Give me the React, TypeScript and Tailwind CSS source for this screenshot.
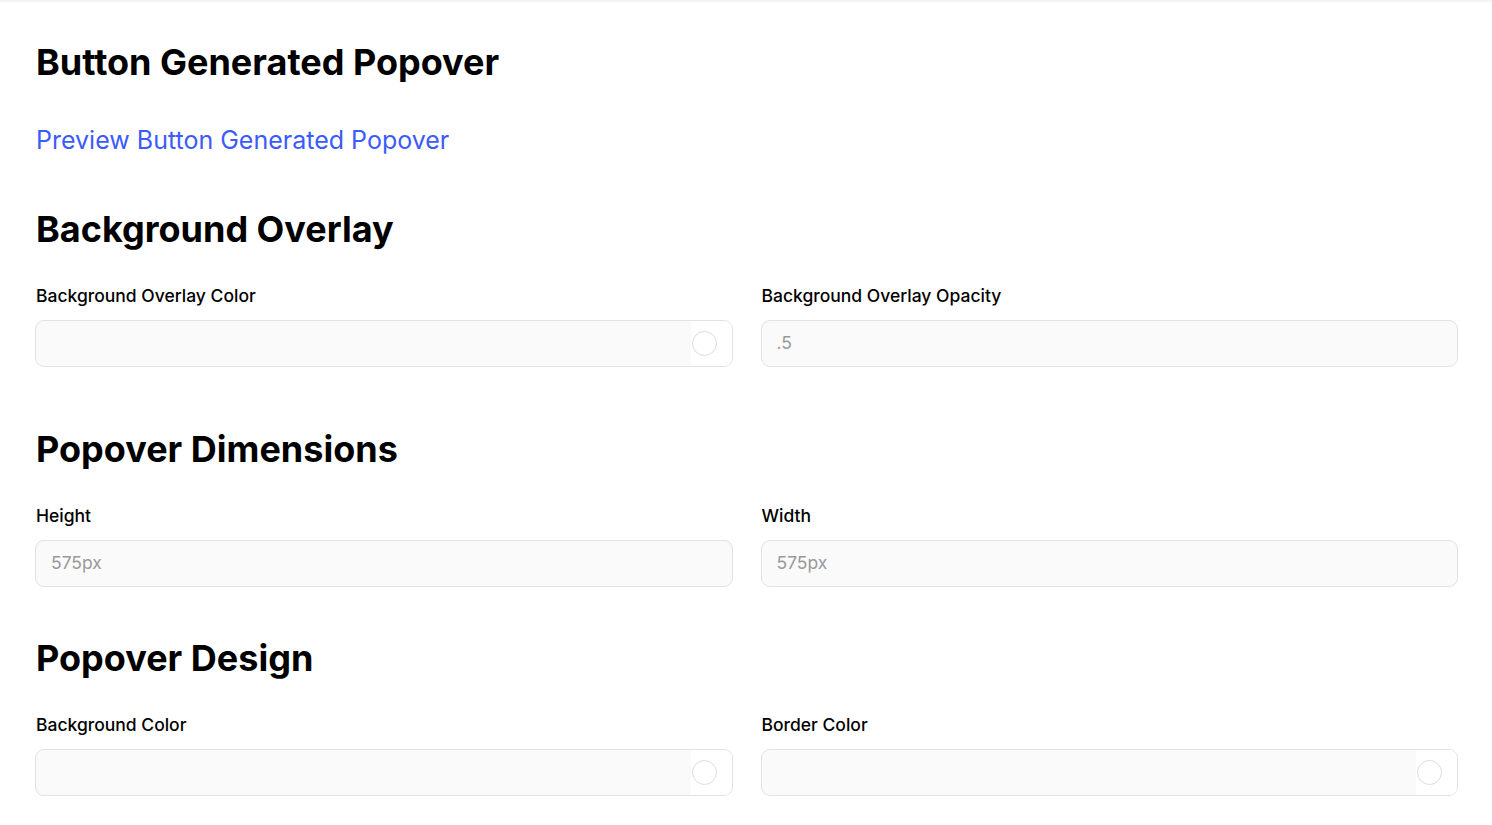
import React from "react";

const font = { fontFamily: "Inter, 'Noto Sans', sans-serif" };

function Label({ children }: { children: React.ReactNode }) {
  return <div className="text-[17.5px] leading-[24px] font-medium text-black mb-[12px] pl-[1px]">{children}</div>;
}

function TextField({ value }: { value: string }) {
  return (
    <div className="h-[47px] rounded-[9px] border border-[#e2e2e2] bg-[#fafafa] flex items-center px-[15px] text-[17.5px] text-[#999999]">
      {value}
    </div>
  );
}

function ColorField() {
  return (
    <div className="h-[47px] rounded-[9px] border border-[#e2e2e2] bg-[#fafafa] flex items-stretch overflow-hidden">
      <div className="flex-1" />
      <div className="w-[41px] bg-white flex items-center justify-start pl-[1px]">
        <div className="w-[25px] h-[25px] rounded-full border border-[#dcdcdc] bg-white" />
      </div>
    </div>
  );
}

function Field({ label, children }: { label: string; children: React.ReactNode }) {
  return (
    <div className="flex flex-col">
      <Label>{label}</Label>
      {children}
    </div>
  );
}

export default function App() {
  return (
    <div style={font} className="min-h-[825px] bg-white border-t-2 border-[#f3f3f3] pl-[35px] pr-[34px] pb-10">
      <h1 className="text-[36px] leading-[44px] font-bold text-black pt-[38px] pl-[1px]">Button Generated Popover</h1>
      <a className="block mt-[40px] text-[25px] leading-[32px] text-[#3b5bfd] pl-[1px]">Preview Button Generated Popover</a>

      <h2 className="mt-[51px] text-[36px] leading-[44px] font-bold text-black pl-[1px]">Background Overlay</h2>
      <div className="mt-[33px] grid grid-cols-2 gap-[28px]">
        <Field label="Background Overlay Color"><ColorField /></Field>
        <Field label="Background Overlay Opacity"><TextField value=".5" /></Field>
      </div>

      <h2 className="mt-[60px] text-[36px] leading-[44px] font-bold text-black pl-[1px]">Popover Dimensions</h2>
      <div className="mt-[33px] grid grid-cols-2 gap-[28px]">
        <Field label="Height"><TextField value="575px" /></Field>
        <Field label="Width"><TextField value="575px" /></Field>
      </div>

      <h2 className="mt-[49px] text-[36px] leading-[44px] font-bold text-black pl-[1px]">Popover Design</h2>
      <div className="mt-[33px] grid grid-cols-2 gap-[28px]">
        <Field label="Background Color"><ColorField /></Field>
        <Field label="Border Color"><ColorField /></Field>
      </div>
    </div>
  );
}
